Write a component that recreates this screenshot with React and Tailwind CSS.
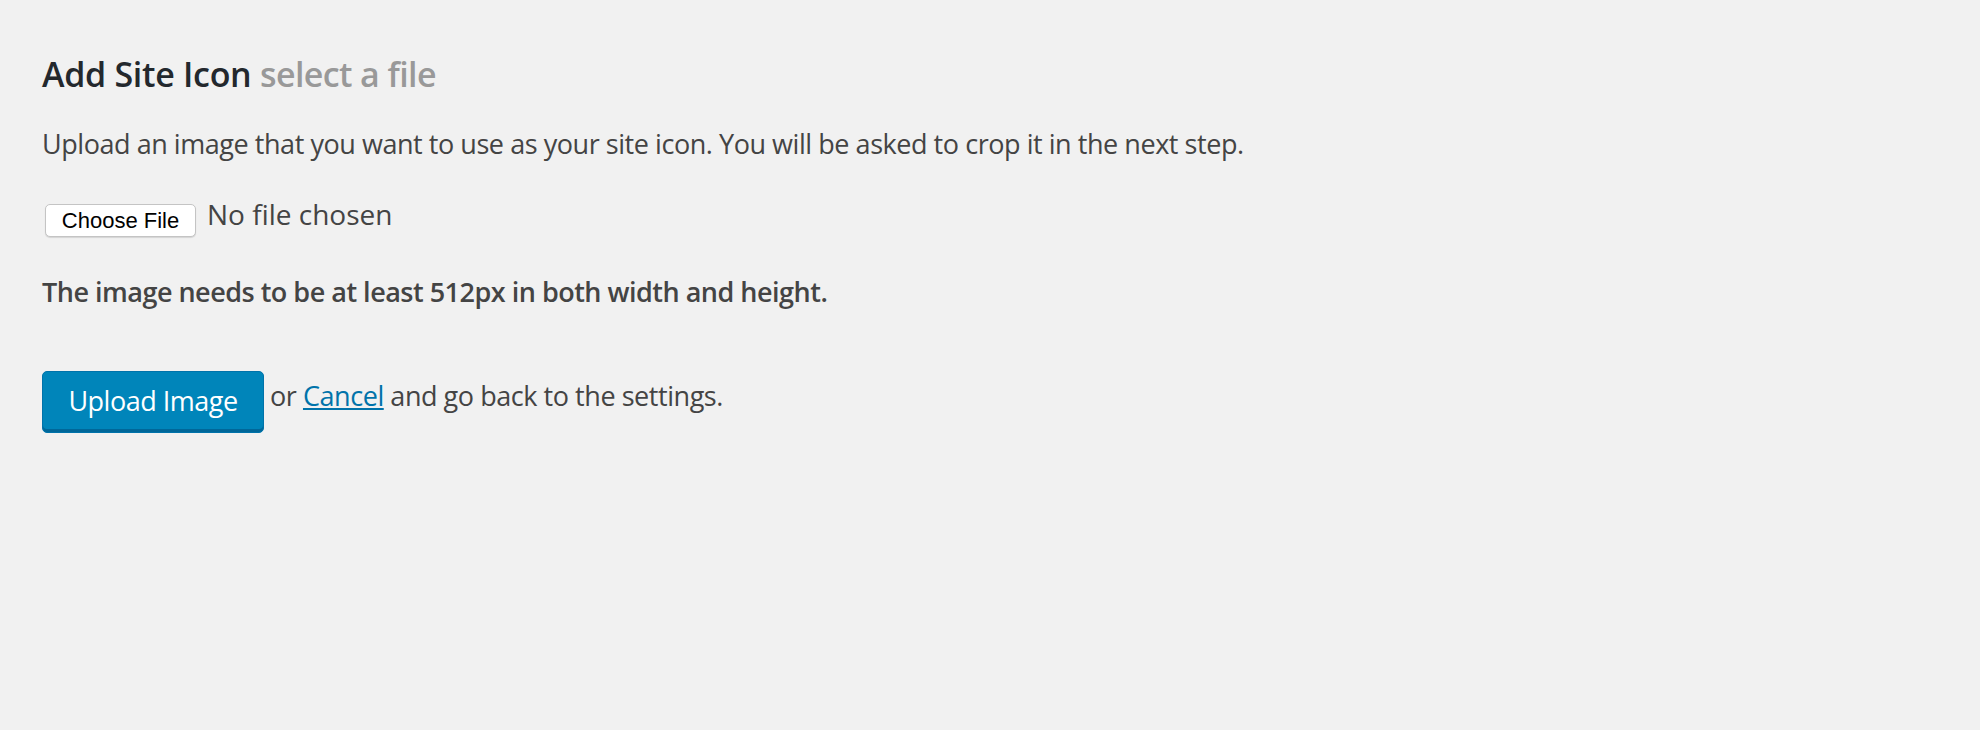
import React from "react";

const App = () => {
  return (
    <div className="min-h-[730px] w-full bg-[#f1f1f1] text-[#444] font-['Open_Sans',sans-serif]">
      <div className="pl-[42px] pt-[52px]">
        {/* Title */}
        <h1 className="text-[34px] leading-[45px] font-semibold tracking-[-0.3px] text-[#23282d]">
          Add Site Icon <span className="tracking-[-0.6px] text-[#999]">select a file</span>
        </h1>

        <p className="mt-[26px] text-[27px] leading-[42px] tracking-[-0.45px]">
          Upload an image that you want to use as your site icon. You will be asked to crop it in the next step.
        </p>

        {/* File picker */}
        <div className="mt-[28px] flex items-start gap-[11px]">
          <button className="ml-[3px] mt-[11px] h-[33px] w-[151px] rounded-[5px] border border-[#c4c4c4] bg-white text-[22px] leading-[31px] text-black font-['Liberation_Sans',Arial,sans-serif] shadow-[0_1px_1px_rgba(0,0,0,0.12)]">
            Choose File
          </button>
          <span className="text-[28px] leading-[42px]">No file chosen</span>
        </div>

        <p className="mt-[34px] text-[27px] leading-[42px] font-semibold tracking-[-0.5px]">
          The image needs to be at least 512px in both width and height.
        </p>

        {/* Actions */}
        <div className="mt-[58px] flex items-start gap-[6px]">
          <button className="flex h-[62px] w-[222px] items-center justify-center rounded-[5px] border border-[#0073aa] bg-[#0085ba] pb-[3px] text-[27px] leading-[42px] tracking-[-0.5px] text-white shadow-[inset_0_-3px_0_#006799]">
            Upload Image
          </button>
          <span className="mt-[4px] text-[27px] leading-[42px] tracking-[-0.45px]">
            or{" "}
            <a href="#" className="text-[#0073aa] underline">
              Cancel
            </a>{" "}
            and go back to the settings.
          </span>
        </div>
      </div>
    </div>
  );
};

export default App;
